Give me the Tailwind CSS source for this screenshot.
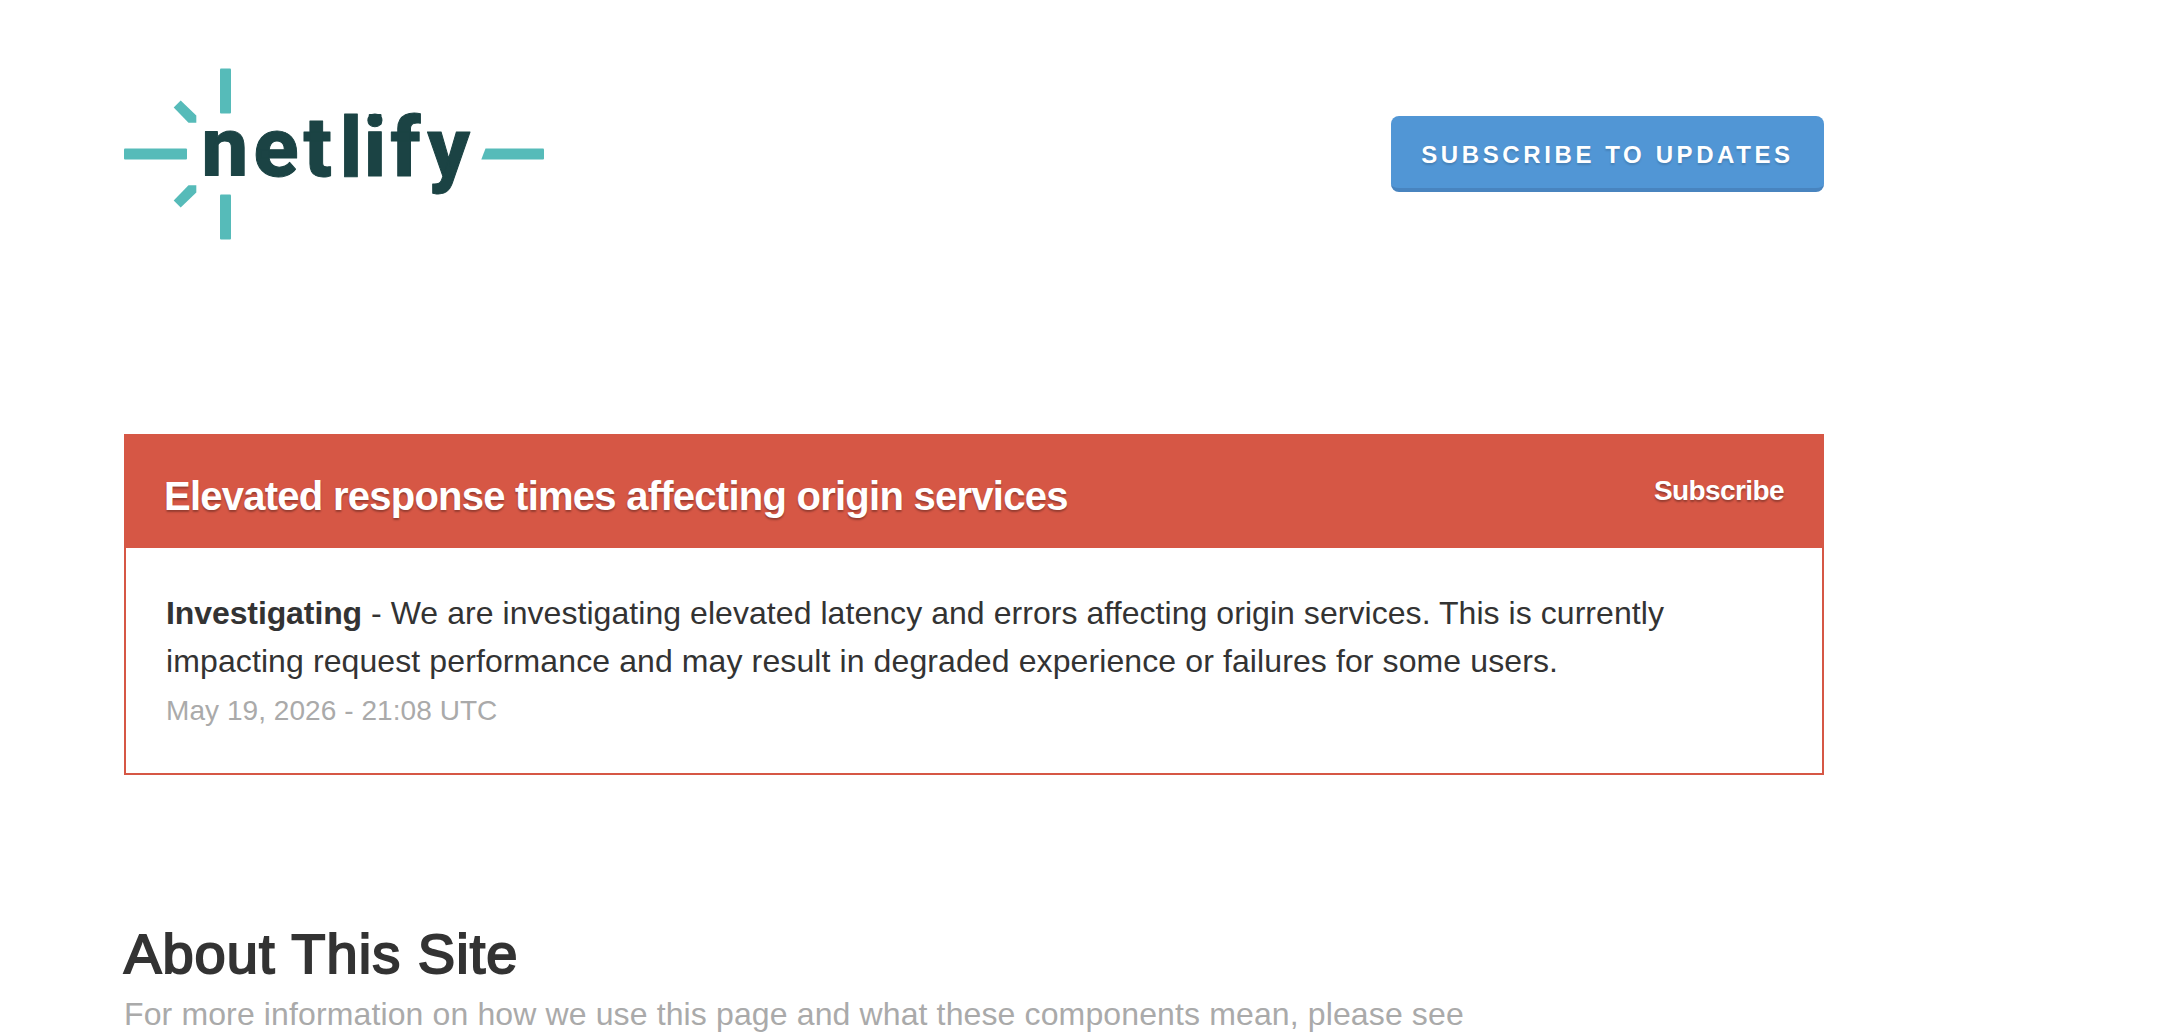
<!DOCTYPE html>
<html lang="en">
<head>
    <meta charset="UTF-8">
    <meta name="viewport" content="width=device-width, initial-scale=1.0">
    <title>Netlify Status</title>
    <script src="https://cdn.jsdelivr.net/npm/@tailwindcss/browser@4"></script>
</head>
<body class="h-[1036px] overflow-hidden bg-white font-['Liberation_Sans',Arial,sans-serif] text-[32px] leading-12 text-[#333]">
    <div class="ml-[124px] w-[1700px]">
        <header class="flex items-start justify-between pt-[68px]">
            <svg class="h-[172px] w-[420px]" viewBox="0 0 420 172" role="img" aria-label="netlify">
                <g fill="#56bbb9">
                    <rect x="96" y="0.5" width="11" height="45" rx="1"/>
                    <rect x="96" y="126.5" width="11" height="45" rx="1"/>
                    <rect x="0" y="80.5" width="63" height="11" rx="1"/>
                    <path d="M361.500 80.500H419a1 1 0 0 1 1 1V90.500a1 1 0 0 1-1 1H357.300z"/>
                    <path d="M49.700 39.500 56.700 32.500 72.300 47.500V54.700H64.500z"/>
                    <path d="M49.700 132.500 56.700 139.500 72.300 124.500V117.300H64.500z"/>
                </g>
                <g fill="#1b4344">
                    <text x="77.500 129.500 179.500 215.700 239.700 266.500 303.500" y="108" stroke="#1b4344" stroke-linejoin="round" class="font-['Roboto',sans-serif] text-[83px] font-extrabold">netlify</text>
                    <rect x="244.700" y="46" width="12.800" height="11" rx="1"/>
                </g>
            </svg>
            <a href="#" class="mt-12 flex h-[76px] w-[433px] items-center justify-center rounded-lg border-b-4 border-[#4884bf] bg-[#5196d5] pt-1.5 text-2xl font-bold tracking-[3.6px] whitespace-nowrap text-white [text-shadow:0_2px_2px_rgb(0_0_0/0.15)]">SUBSCRIBE TO UPDATES</a>
        </header>

        <section class="mt-[194px] h-[341px] border-2 border-[#d65745]">
            <div class="flex h-28 items-start justify-between bg-[#d65745] px-[38px] text-white [text-shadow:0_2px_2px_rgb(0_0_0/0.3)]">
                <h2 class="pt-[30px] text-[40px] leading-[60px] font-bold tracking-[-0.75px] whitespace-nowrap">Elevated response times affecting origin services</h2>
                <a href="#" class="pt-[34px] text-[28px] leading-[42px] font-bold tracking-[-0.6px]">Subscribe</a>
            </div>
            <div class="px-10 pt-[41px] whitespace-nowrap">
                <p class="tracking-[0.055px]"><strong class="tracking-[-0.1px]">Investigating</strong> - We are investigating elevated latency and errors affecting origin services. This is currently</p>
                <p class="tracking-[0.105px]">impacting request performance and may result in degraded experience or failures for some users.</p>
                <p class="pt-0.5 text-[28px] tracking-[0.06px] text-[#aaa]">May 19, 2026 - 21:08 UTC</p>
            </div>
        </section>

        <section class="mt-[143px] whitespace-nowrap">
            <h2 class="text-[56px] leading-[72px] tracking-[1.05px] [-webkit-text-stroke:2px_#333]">About This Site</h2>
            <p class="tracking-[0.127px] text-[#aaa]">For more information on how we use this page and what these components mean, please see</p>
        </section>
    </div>
</body>
</html>
